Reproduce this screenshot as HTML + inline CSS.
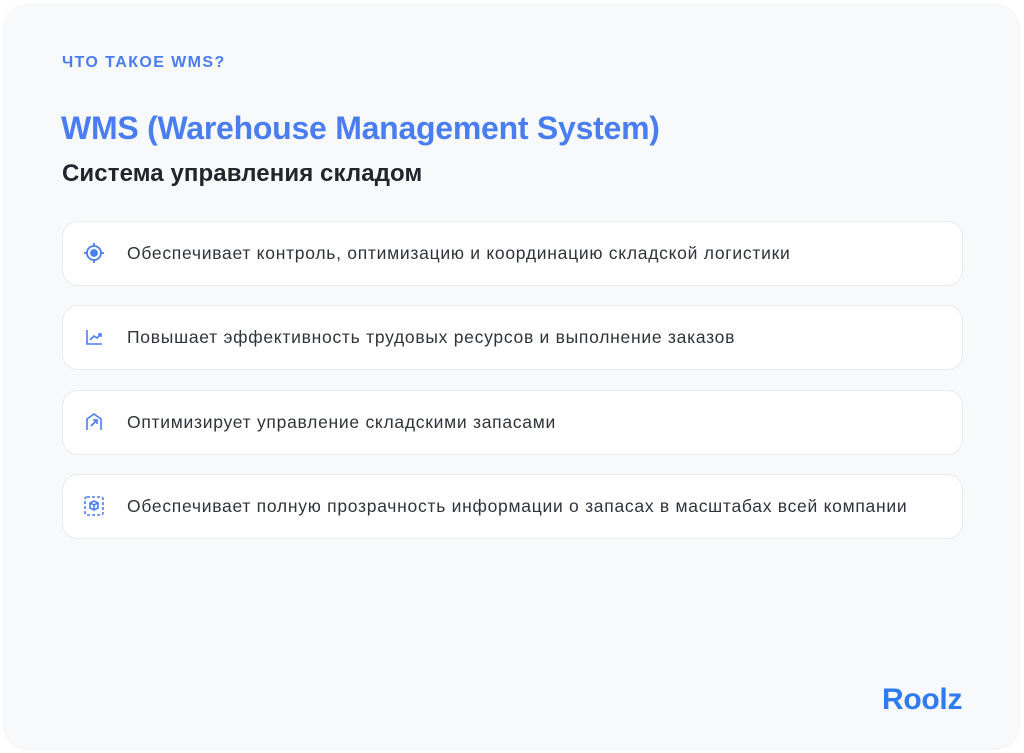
<!DOCTYPE html>
<html><head><meta charset="utf-8"><style>
body{margin:0;width:1024px;height:753px;background:#fff;font-family:"Liberation Sans",sans-serif;overflow:hidden}
.card{position:absolute;left:4px;top:4px;width:1015px;height:744px;background:#f8f9fb;border-radius:24px;box-shadow:0 1px 3px rgba(0,0,0,.08)}
.lab{position:absolute;left:62px;top:54px;font-size:16px;font-weight:bold;color:#4a7ef0;letter-spacing:1.4px}
.t{position:absolute;left:61px;top:110px;font-size:32px;font-weight:bold;color:#4a7ef0;letter-spacing:-0.25px}
.s{position:absolute;left:62px;top:160px;font-size:24px;font-weight:bold;color:#23252b;letter-spacing:0.1px}
.it{position:absolute;left:62px;width:899px;height:63px;background:#fff;border:1px solid #e9ebef;border-radius:16px}
.it svg{position:absolute;left:20px;top:20px}
.it span{position:absolute;left:64px;top:21px;font-size:17.5px;color:#30333a;letter-spacing:0.72px}
.logo{position:absolute;left:882px;top:683px;font-size:30px;font-weight:bold;color:#2f7cf0;letter-spacing:-0.3px}
</style></head><body>
<div class="card"></div>
<div class="lab">ЧТО ТАКОЕ WMS?</div>
<div class="t">WMS (Warehouse Management System)</div>
<div class="s">Система управления складом</div>
<div class="it" style="top:221px"><svg width="22" height="22" viewBox="0 0 22 22" fill="none" stroke="#4a7ef0" stroke-width="1.8"><circle cx="11" cy="11" r="7"/><circle cx="11" cy="11" r="3" fill="#4a7ef0"/><path d="M11 1v3M11 18v3M1 11h3M18 11h3"/></svg><span>Обеспечивает контроль, оптимизацию и координацию складской логистики</span></div>
<div class="it" style="top:305px"><svg width="22" height="22" viewBox="0 0 22 22" fill="none" stroke="#4a7ef0" stroke-width="1.6"><path d="M4 4v14h15M7 14l4-4 3 2 4-4M15 8h3v3"/></svg><span>Повышает эффективность трудовых ресурсов и выполнение заказов</span></div>
<div class="it" style="top:390px"><svg width="22" height="22" viewBox="0 0 22 22" fill="none" stroke="#4a7ef0" stroke-width="1.6"><path d="M4 19V8l7-5 7 5v11M8 15l6-6M10 9h4v4"/></svg><span>Оптимизирует управление складскими запасами</span></div>
<div class="it" style="top:474px"><svg width="22" height="22" viewBox="0 0 22 22" fill="none" stroke="#4a7ef0" stroke-width="1.6"><rect x="2" y="2" width="18" height="18" rx="2" stroke-dasharray="3 2"/><path d="M11 6l4 2v5l-4 2-4-2V8zM7 8l4 2 4-2M11 10v5"/></svg><span>Обеспечивает полную прозрачность информации о запасах в масштабах всей компании</span></div>
<div class="logo">Roolz</div>
</body></html>
